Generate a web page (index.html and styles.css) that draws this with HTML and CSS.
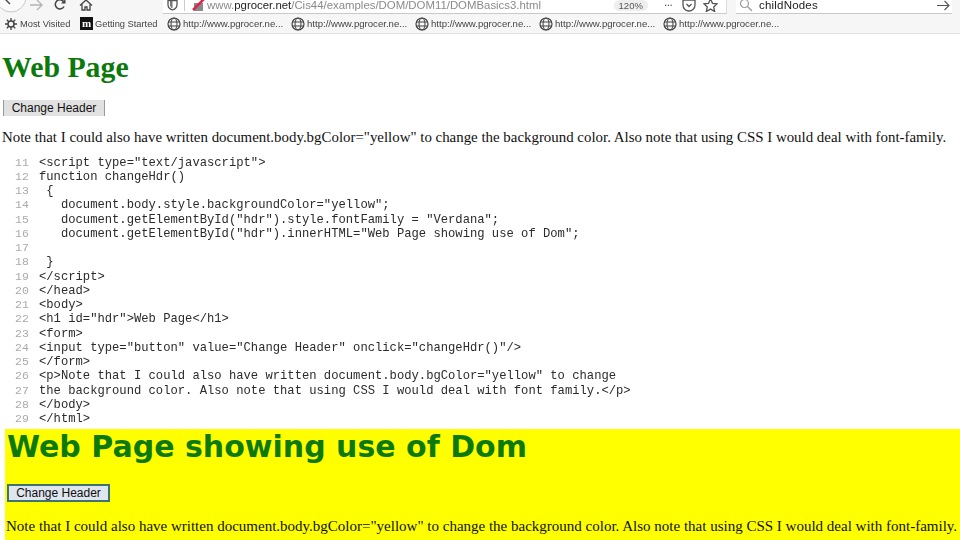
FILE: index.html
```html
<!DOCTYPE html>
<html lang="en">
<head>
<meta charset="utf-8">
<title>DOM Basics</title>
<link rel="stylesheet" href="styles.css">
</head>
<body>
<div class="chrome">
  <div class="toolbar">
    <div class="nav">
      <svg class="ic back" width="29" height="20" viewBox="0 0 29 20"><circle cx="11" cy="2" r="15" fill="#fafafa" stroke="#c8c8c8"/><path d="M5 4h13M10 -1L5 4l5 5" fill="none" stroke="#444" stroke-width="1.4"/></svg>
      <svg class="ic" width="14" height="12" viewBox="0 0 14 12"><path d="M1 6h12M8 1l5 5-5 5" fill="none" stroke="#b4b4b4" stroke-width="1.4"/></svg>
      <svg class="ic reload" width="14" height="12" viewBox="0 0 14 12"><path d="M11 7.500A4.600 4.600 0 1 1 10.500 2.500" fill="none" stroke="#444" stroke-width="1.500"/><path d="M12.500 0v4.500H8z" fill="#444"/></svg>
      <svg class="ic home" width="14" height="12" viewBox="0 0 14 12"><path d="M1 6.500L7 1l6 5.500M3 5.500V11h3V8h2v3h3V5.500" fill="none" stroke="#444" stroke-width="1.300"/></svg>
    </div>
    <div class="urlbar">
      <svg width="11" height="12" viewBox="0 0 11 12"><path d="M1 1.500h9v4c0 3-2 4.700-4.500 5.500C3 10.200 1 8.500 1 5.500z" fill="none" stroke="#555" stroke-width="1.300"/><path d="M5.500 2v7.500C3.500 8.500 3 7 3 5.500V2z" fill="#777"/></svg>
      <span class="sep"></span>
      <svg class="lock" width="14" height="12" viewBox="0 0 14 12"><rect x="2" y="4" width="9" height="8" fill="#8a8a8a"/><path d="M1 11L12 0" stroke="#d8284e" stroke-width="2.500"/></svg>
      <span class="url"><span class="dim">www.</span>pgrocer.net<span class="dim">/Cis44/examples/DOM/DOM11/DOMBasics3.html</span></span>
      <span class="zoom">120%</span>
      <span class="dots">•••</span>
      <svg class="pocket" width="14" height="13" viewBox="0 0 14 13"><path d="M1 1h12v5a6 6 0 0 1-12 0z" fill="none" stroke="#555" stroke-width="1.300"/><path d="M4.500 5L7 7.500 9.500 5" fill="none" stroke="#555" stroke-width="1.300"/></svg>
      <svg class="star" width="15" height="14" viewBox="0 0 15 14"><path d="M7.500 1l2 4.300 4.600.5-3.400 3.100 1 4.600-4.200-2.400-4.200 2.400 1-4.600L.9 5.800l4.600-.5z" fill="none" stroke="#555" stroke-width="1.300"/></svg>
    </div>
    <div class="search">
      <svg width="14" height="14" viewBox="0 0 14 14"><circle cx="5.500" cy="5.500" r="4" fill="none" stroke="#999" stroke-width="1.200"/><path d="M8.500 8.500L13 13" stroke="#999" stroke-width="1.200"/></svg>
      <span class="term">childNodes</span>
      <svg class="go" width="13" height="11" viewBox="0 0 13 11"><path d="M0 5.500h12M7.500 1L12 5.500 7.500 10" fill="none" stroke="#555" stroke-width="1.100"/></svg>
    </div>
  </div>
  <div class="bookmarks">
    <span class="bm first"><svg width="12" height="12" viewBox="0 0 12 12"><circle cx="6" cy="6" r="3" fill="none" stroke="#444" stroke-width="1.500"/><path d="M6 0v3M6 9v3M0 6h3M9 6h3M1.800 1.800l2 2M8.200 8.200l2 2M1.800 10.200l2-2M8.200 3.800l2-2" stroke="#444" stroke-width="1.300"/></svg>Most Visited</span>
    <span class="bm second"><span class="mdn">m</span>Getting Started</span>
    <span class="bm site"><svg width="14" height="14" viewBox="0 0 14 14"><circle cx="7" cy="7" r="6" fill="none" stroke="#444" stroke-width="1.200"/><ellipse cx="7" cy="7" rx="3" ry="6" fill="none" stroke="#444"/><path d="M1 5h12M1 9h12" stroke="#444"/></svg>http://www.pgrocer.ne...</span>
    <span class="bm site"><svg width="14" height="14" viewBox="0 0 14 14"><circle cx="7" cy="7" r="6" fill="none" stroke="#444" stroke-width="1.200"/><ellipse cx="7" cy="7" rx="3" ry="6" fill="none" stroke="#444"/><path d="M1 5h12M1 9h12" stroke="#444"/></svg>http://www.pgrocer.ne...</span>
    <span class="bm site"><svg width="14" height="14" viewBox="0 0 14 14"><circle cx="7" cy="7" r="6" fill="none" stroke="#444" stroke-width="1.200"/><ellipse cx="7" cy="7" rx="3" ry="6" fill="none" stroke="#444"/><path d="M1 5h12M1 9h12" stroke="#444"/></svg>http://www.pgrocer.ne...</span>
    <span class="bm site"><svg width="14" height="14" viewBox="0 0 14 14"><circle cx="7" cy="7" r="6" fill="none" stroke="#444" stroke-width="1.200"/><ellipse cx="7" cy="7" rx="3" ry="6" fill="none" stroke="#444"/><path d="M1 5h12M1 9h12" stroke="#444"/></svg>http://www.pgrocer.ne...</span>
    <span class="bm site"><svg width="14" height="14" viewBox="0 0 14 14"><circle cx="7" cy="7" r="6" fill="none" stroke="#444" stroke-width="1.200"/><ellipse cx="7" cy="7" rx="3" ry="6" fill="none" stroke="#444"/><path d="M1 5h12M1 9h12" stroke="#444"/></svg>http://www.pgrocer.ne...</span>
  </div>
</div>

<section class="page">
  <h1 class="head">Web Page</h1>
  <button class="btn" type="button">Change Header</button>
  <p class="note">Note that I could also have written document.body.bgColor="yellow" to change the background color. Also note that using CSS I would deal with font-family.</p>
</section>

<ol class="code" start="11">
  <li>&lt;script type="text/javascript"&gt;</li>
  <li>function changeHdr()</li>
  <li> {</li>
  <li>   document.body.style.backgroundColor="yellow";</li>
  <li>   document.getElementById("hdr").style.fontFamily = "Verdana";</li>
  <li>   document.getElementById("hdr").innerHTML="Web Page showing use of Dom";</li>
  <li></li>
  <li> }</li>
  <li>&lt;/script&gt;</li>
  <li>&lt;/head&gt;</li>
  <li>&lt;body&gt;</li>
  <li>&lt;h1 id="hdr"&gt;Web Page&lt;/h1&gt;</li>
  <li>&lt;form&gt;</li>
  <li>&lt;input type="button" value="Change Header" onclick="changeHdr()"/&gt;</li>
  <li>&lt;/form&gt;</li>
  <li>&lt;p&gt;Note that I could also have written document.body.bgColor="yellow" to change</li>
  <li>the background color. Also note that using CSS I would deal with font family.&lt;/p&gt;</li>
  <li>&lt;/body&gt;</li>
  <li>&lt;/html&gt;</li>
</ol>

<section class="result">
  <h1 class="head-v">Web Page showing use of Dom</h1>
  <button class="btn-v" type="button">Change Header</button>
  <p class="note-v">Note that I could also have written document.body.bgColor="yellow" to change the background color. Also note that using CSS I would deal with font-family.</p>
</section>
</body>
</html>
```

FILE: styles.css
```css
* { box-sizing: border-box; }
html, body { margin: 0; padding: 0; }
body {
  width: 960px;
  height: 540px;
  overflow: hidden;
  background: #fff;
  display: flex;
  flex-direction: column;
  font-family: "Liberation Serif", serif;
  color: #111;
}
.chrome {
  height: 34px;
  background: #f6f6f6;
  border-bottom: 1px solid #e2e2e2;
  display: flex;
  flex-direction: column;
  font-family: "Liberation Sans", sans-serif;
  flex: none;
  filter: blur(.35px);
}
.toolbar {
  height: 14px;
  display: flex;
  flex: none;
  overflow: hidden;
}
.nav {
  width: 163px;
  height: 10px;
  display: flex;
  align-items: center;
  flex: none;
}
.nav .ic { flex: none; }
.reload { margin-left: 10px; }
.home { margin-left: 12px; }
.urlbar {
  width: 564px;
  height: 14px;
  background: #fff;
  border-bottom: 1px solid #c9c9c9;
  border-right: 1px solid #ddd;
  display: flex;
  align-items: center;
  padding: 0 5px 3px 4px;
  flex: none;
}
.sep { width: 1px; height: 11px; background: #ccc; margin: 0 7px 0 6px; }
.url { font-size: 11.4px; margin-left: 1px; color: #222; white-space: nowrap; flex: 1; }
.dim { color: #8a8a8a; }
.zoom {
  width: 34px;
  height: 11px;
  line-height: 11px;
  font-size: 9.5px;
  text-align: center;
  color: #555;
  background: #eee;
  border-radius: 6px;
  margin-right: 17px;
}
.dots { font-size: 5px; letter-spacing: 1px; color: #555; margin-right: 9px; }
.pocket { margin-right: 7px; }
.star { margin-right: 3px; }
.search {
  width: 216px;
  margin-left: 9px;
  height: 14px;
  background: #fff;
  border-bottom: 1px solid #c9c9c9;
  display: flex;
  align-items: center;
  padding: 0 2px 3px 3px;
  flex: none;
}
.term { font-size: 11.5px; color: #222; margin-left: 6px; flex: 1; letter-spacing: .2px; }
.bookmarks {
  height: 19px;
  display: flex;
  align-items: center;
  padding-left: 4px;
  font-size: 9.6px;
  color: #444;
  white-space: nowrap;
}
.bm { display: flex; align-items: center; flex: none; }
.bm svg { flex: none; }
.first { width: 76px; gap: 3px; padding-left: 1px; font-size: 9.3px; }
.second { width: 87px; gap: 2px; font-size: 9.3px; }
.site { width: 124px; gap: 2px; }
.mdn {
  width: 13px;
  height: 13px;
  background: #111;
  color: #fff;
  font: bold 11px/12px "Liberation Serif", serif;
  text-align: center;
}
.page {
  height: 119px;
  flex: none;
  padding: 0 2px;
  display: flex;
  flex-direction: column;
  align-items: flex-start;
}
.head {
  margin: 16px 0 0;
  font-size: 29.8px;
  line-height: 34px;
  font-weight: bold;
  color: #0b7a0b;
}
.btn {
  margin: 16px 0 0 1px;
  width: 102px;
  height: 16px;
  padding: 0;
  background: #e1e1e1;
  border: 0;
  border-left: 1px solid #999;
  border-right: 1px solid #999;
  font: 12px/16px "Liberation Sans", sans-serif;
  color: #111;
}
.note {
  margin: 12px 0 0;
  font-size: 14.9px;
  line-height: 18px;
  white-space: nowrap;
}
.code {
  list-style: none;
  margin: 0;
  padding: 2.5px 0 0 39px;
  height: 276px;
  flex: none;
  font-family: "Liberation Mono", monospace;
  font-size: 12.18px;
  line-height: 14.28px;
  color: #2b2b2b;
  counter-reset: n 10;
  filter: blur(.3px);
}
.code li {
  counter-increment: n;
  height: 14.28px;
  position: relative;
  white-space: pre;
}
.code li::before {
  content: counter(n);
  position: absolute;
  left: -24px;
  color: #aaa;
  font-size: 11.5px;
}
.result {
  flex: 1;
  margin-left: 5px;
  background: #ff0;
  overflow: hidden;
  display: flex;
  flex-direction: column;
  align-items: flex-start;
  padding-left: 1px;
}
.head-v {
  margin: 0 0 0 1px;
  font-family: "DejaVu Sans", Verdana, sans-serif;
  font-size: 30px;
  line-height: 36px;
  font-weight: bold;
  color: #0b7a0b;
  white-space: nowrap;
}
.btn-v {
  margin: 19px 0 0 1px;
  width: 103px;
  height: 18px;
  padding: 0;
  background: #dfe6ee;
  border: 2px solid #3e7373;
  font: 12px/14px "Liberation Sans", sans-serif;
  color: #111;
}
.note-v {
  margin: 15px 0 0;
  font-size: 15px;
  line-height: 18px;
  white-space: nowrap;
}
```
